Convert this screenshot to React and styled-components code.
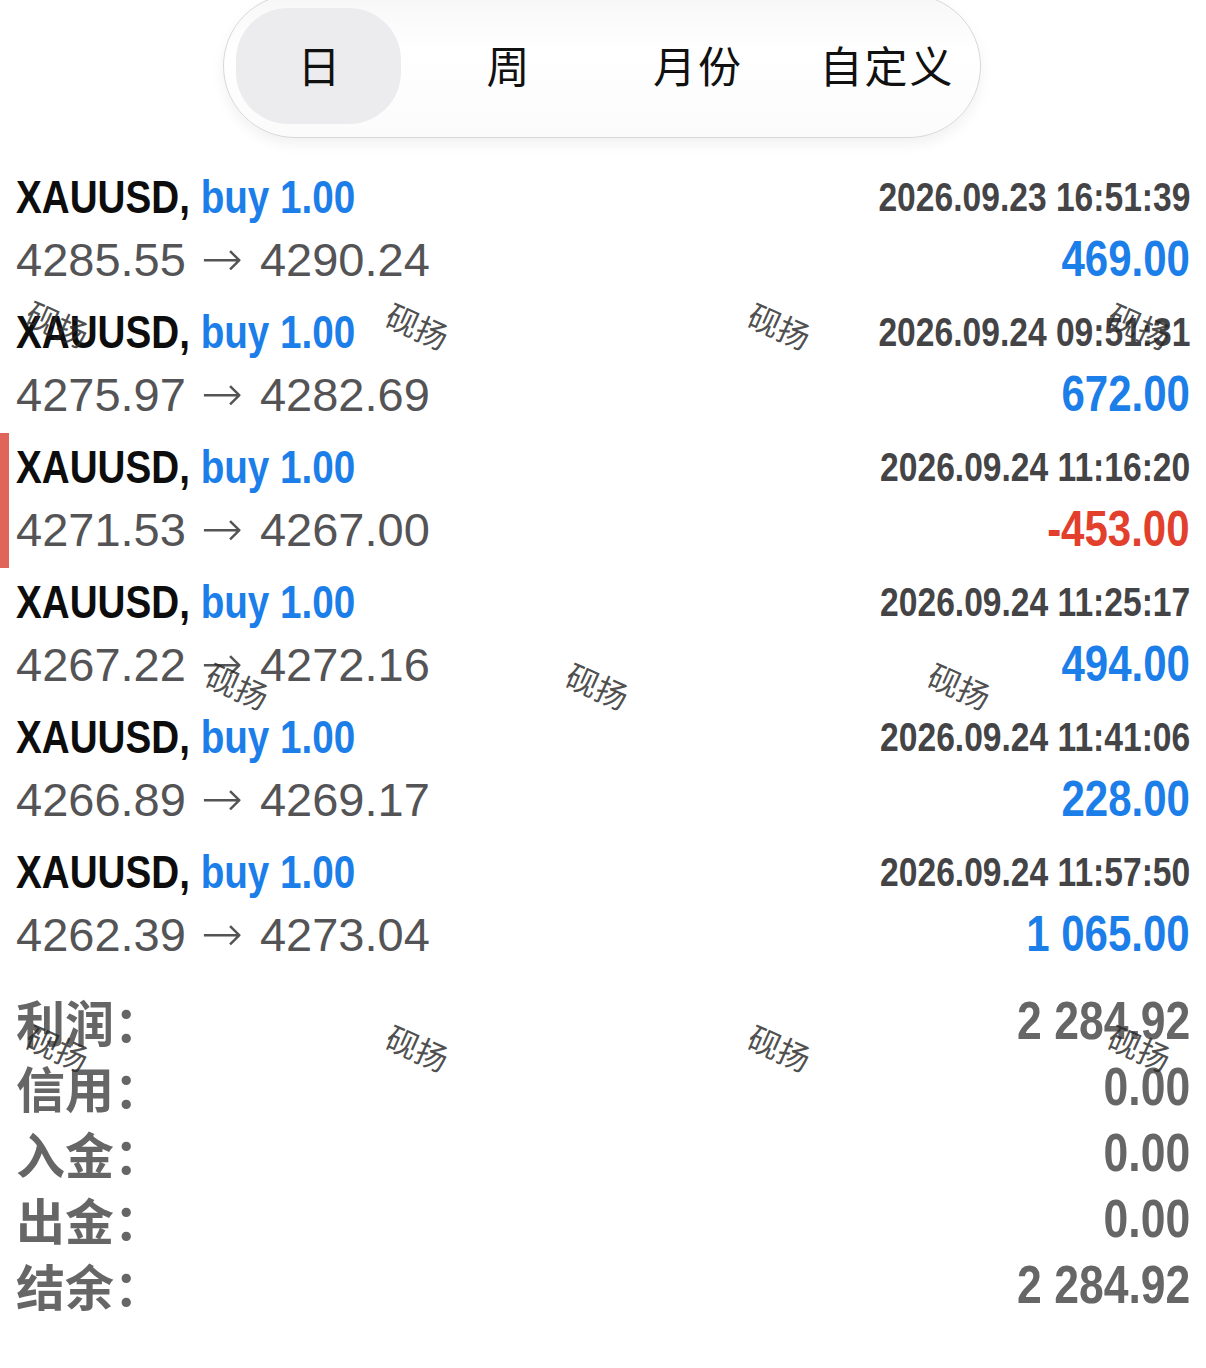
import React from "react";
import styled, { createGlobalStyle, css } from "styled-components";

const GlobalStyle = createGlobalStyle`
  html, body {
    margin: 0;
    padding: 0;
    background: #ffffff;
  }
  body {
    font-family: "Liberation Sans", Arial, sans-serif;
    overflow: hidden;
  }
`;

// no narrow face installed, so squeeze the bold figures by hand
const condensed = (origin) => css`
  font-family: "Liberation Sans", sans-serif;
  font-weight: 700;
  line-height: 1;
  display: inline-block;
  white-space: nowrap;
  transform: scaleX(0.84);
  transform-origin: ${origin} center;
`;

const Page = styled.div`
  position: relative;
  width: 1206px;
  height: 1368px;
  overflow: hidden;
  background: #fff;
`;

const TabsWrap = styled.div`
  display: flex;
  justify-content: center;
  margin-top: -6px;
`;

const Tabs = styled.div`
  display: grid;
  grid-template-columns: repeat(4, 189px);
  height: 144px;
  box-sizing: border-box;
  border: 1px solid #d8d8d8;
  border-radius: 72px;
  background: linear-gradient(#f7f7f8, #ffffff 40%, #fbfbfb);
  box-shadow: 0 6px 14px rgba(0, 0, 0, 0.06);
  margin-left: -2px;
`;

const Tab = styled.div`
  display: flex;
  align-items: center;
  justify-content: center;
  margin: 13px 12px;
  padding-bottom: 4px;
  padding-left: 3px;
  border-radius: 52px;
  background: ${(p) => (p.$active ? "#ececee" : "transparent")};
  font-family: "Noto Sans CJK SC", sans-serif;
  font-size: 43px;
  color: #111;
  letter-spacing: 2px;
`;

const List = styled.div`
  margin-top: 25px;
`;

const Row = styled.div`
  position: relative;
  height: 135px;
  padding: 0 16px;
  box-sizing: border-box;
  display: flex;
  flex-direction: column;

  &::before {
    content: "";
    display: ${(p) => (p.$marked ? "block" : "none")};
    position: absolute;
    left: 0;
    top: 0;
    bottom: 0;
    width: 9px;
    background: #e0645a;
  }
`;

const Line = styled.div`
  display: flex;
  justify-content: space-between;
  align-items: center;
  height: ${(p) => p.$h}px;
`;

const Title = styled.div`
  ${condensed("left")}
  font-size: 46px;
  color: #0d0d0d;
`;

const Side = styled.span`
  color: #1b7ee9;
`;

const DateText = styled.div`
  ${condensed("right")}
  font-size: 40px;
  color: #444446;
`;

const Price = styled.div`
  font-family: "Liberation Sans", sans-serif;
  font-size: 47px;
  line-height: 1;
  color: #545456;
  white-space: nowrap;
`;

const Arrow = styled.span`
  font-family: "DejaVu Sans", sans-serif;
  font-weight: 200;
  font-size: 50px;
  margin: 0 4px 0 2px;
`;

const Profit = styled.div`
  ${condensed("right")}
  font-size: 50px;
  color: ${(p) => (p.$loss ? "#e2402c" : "#1b7ee9")};
`;

const Summary = styled.div`
  margin-top: 14px;
  padding: 0 16px;
`;

const SumRow = styled.div`
  display: flex;
  justify-content: space-between;
  align-items: center;
  height: 66px;
`;

const SumLabel = styled.div`
  font-family: "Noto Sans CJK SC", sans-serif;
  font-weight: 700;
  font-size: 49px;
  line-height: 1;
  color: #666;
`;

const SumValue = styled.div`
  ${condensed("right")}
  font-size: 53px;
  color: #666;
`;

const Watermark = styled.div`
  position: absolute;
  font-family: "Noto Sans CJK SC", sans-serif;
  font-size: 32px;
  font-weight: 400;
  color: rgba(40, 40, 40, 0.82);
  transform: rotate(24deg);
  pointer-events: none;
  white-space: nowrap;
`;

const trades = [
  { open: "4285.55", close: "4290.24", time: "2026.09.23 16:51:39", profit: "469.00" },
  { open: "4275.97", close: "4282.69", time: "2026.09.24 09:51:31", profit: "672.00" },
  { open: "4271.53", close: "4267.00", time: "2026.09.24 11:16:20", profit: "-453.00", loss: true },
  { open: "4267.22", close: "4272.16", time: "2026.09.24 11:25:17", profit: "494.00" },
  { open: "4266.89", close: "4269.17", time: "2026.09.24 11:41:06", profit: "228.00" },
  { open: "4262.39", close: "4273.04", time: "2026.09.24 11:57:50", profit: "1 065.00" },
];

const totals = [
  ["利润", "2 284.92"],
  ["信用", "0.00"],
  ["入金", "0.00"],
  ["出金", "0.00"],
  ["结余", "2 284.92"],
];

const marks = [
  [26, 300], [386, 302], [748, 302], [1108, 302],
  [206, 662], [566, 662], [928, 662],
  [26, 1024], [386, 1024], [748, 1024], [1108, 1024],
];

export default function App() {
  return (
    <Page>
      <GlobalStyle />
      <TabsWrap>
        <Tabs>
          <Tab $active>日</Tab>
          <Tab>周</Tab>
          <Tab>月份</Tab>
          <Tab>自定义</Tab>
        </Tabs>
      </TabsWrap>

      <List>
        {trades.map((t, i) => (
          <Row key={i} $marked={t.loss}>
            <Line $h={68}>
              <Title>
                XAUUSD, <Side>buy 1.00</Side>
              </Title>
              <DateText>{t.time}</DateText>
            </Line>
            <Line $h={56}>
              <Price>
                {t.open} <Arrow>→</Arrow> {t.close}
              </Price>
              <Profit $loss={t.loss}>{t.profit}</Profit>
            </Line>
          </Row>
        ))}
      </List>

      <Summary>
        {totals.map(([label, value]) => (
          <SumRow key={label}>
            <SumLabel>{label}：</SumLabel>
            <SumValue>{value}</SumValue>
          </SumRow>
        ))}
      </Summary>

      {marks.map(([x, y], i) => (
        <Watermark key={i} style={{ left: x, top: y }}>
          砚扬
        </Watermark>
      ))}
    </Page>
  );
}
